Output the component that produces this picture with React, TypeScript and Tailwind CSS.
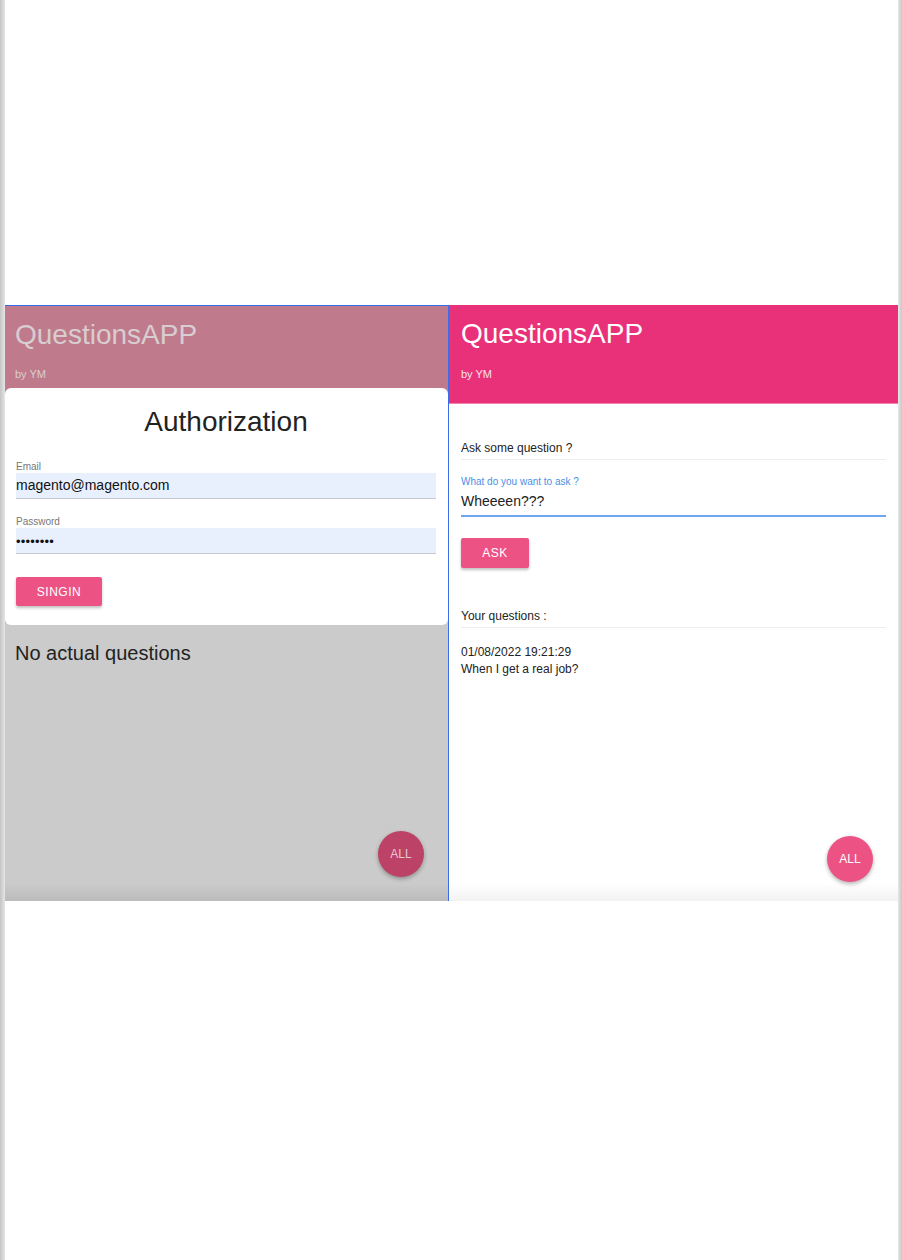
import React from "react";

const font = { fontFamily: '"Liberation Sans", Arial, sans-serif' };

function LeftPanel() {
  return (
    <div className="relative flex w-[444px] flex-col border-t border-r border-[#3b6be8] bg-[#cbcbcb]">
      <div className="h-[98px] bg-[#bf7b8c] pl-[10px] pt-[13px]">
        <div className="text-[28px] leading-[32px] text-[#d8cdd1]">QuestionsAPP</div>
        <div className="mt-[16px] text-[11px] leading-[14px] text-[#dccbd1]">by YM</div>
      </div>
      <div className="-mt-[16px] rounded-[6px] bg-white pb-[19px] pl-[11px] pr-[12px] pt-[18px]">
        <div className="text-center text-[28px] leading-[32px] text-[#222]">Authorization</div>
        <div className="mt-[23px] text-[10px] leading-[12px] text-[#777]">Email</div>
        <div className="flex h-[26px] items-center border-b border-[#c6c9d0] bg-[#e8f0fe] text-[14px] text-[#111]">
          magento@magento.com
        </div>
        <div className="mt-[17px] text-[10px] leading-[12px] text-[#777]">Password</div>
        <div className="flex h-[26px] items-center border-b border-[#c6c9d0] bg-[#e8f0fe] pt-[2px] text-[13px] tracking-[0.2px] text-[#111]">
          ••••••••
        </div>
        <div className="mt-[23px] flex h-[29px] w-[86px] items-center justify-center rounded-[2px] bg-[#ec5384] text-[12px] tracking-[0.5px] text-white shadow-[0_2px_3px_rgba(0,0,0,0.25)]">
          SINGIN
        </div>
      </div>
      <div className="mt-[16px] pl-[10px] text-[20px] leading-[24px] text-[#222]">No actual questions</div>
      <div className="pointer-events-none absolute bottom-0 left-0 right-0 h-[18px] bg-gradient-to-b from-transparent to-[rgba(0,0,0,0.08)]" />
      <div className="absolute bottom-[24px] right-[24px] flex h-[46px] w-[46px] items-center justify-center rounded-full bg-[#bd4267] text-[12px] text-[#e9c7d1] shadow-[0_2px_4px_rgba(0,0,0,0.3)]">
        ALL
      </div>
    </div>
  );
}

function RightPanel() {
  return (
    <div className="relative flex flex-1 flex-col bg-white">
      <div className="h-[99px] border-b border-[#f183ae] bg-[#e9317a] pl-[12px] pt-[13px]">
        <div className="text-[28px] leading-[32px] text-white">QuestionsAPP</div>
        <div className="mt-[17px] text-[11px] leading-[14px] text-[#fbe1eb]">by YM</div>
      </div>
      <div className="flex flex-col px-[12px] pt-[37px]">
        <div className="border-b border-[#eeeeee] pb-[3px] text-[12px] leading-[15px] text-[#222]">Ask some question ?</div>
        <div className="mt-[16px] text-[10px] leading-[12px] text-[#4a8fe7]">What do you want to ask ?</div>
        <div className="mt-[5px] border-b-2 border-[#6fa6ef] pb-[5px] text-[14px] leading-[17px] text-[#222]">Wheeeen???</div>
        <div className="mt-[21px] flex h-[30px] w-[68px] items-center justify-center rounded-[2px] bg-[#ec5384] text-[12px] tracking-[0.5px] text-white shadow-[0_2px_3px_rgba(0,0,0,0.25)]">
          ASK
        </div>
        <div className="mt-[41px] border-b border-[#eeeeee] pb-[3px] text-[12px] leading-[15px] text-[#222]">Your questions :</div>
        <div className="mt-[16px] text-[12px] leading-[17px] text-[#222]">01/08/2022 19:21:29</div>
        <div className="text-[12px] leading-[17px] text-[#222]">When I get a real job?</div>
      </div>
      <div className="pointer-events-none absolute bottom-0 left-0 right-0 h-[18px] bg-gradient-to-b from-transparent to-[rgba(0,0,0,0.05)]" />
      <div className="absolute bottom-[19px] right-[25px] flex h-[46px] w-[46px] items-center justify-center rounded-full bg-[#ec5384] text-[12px] text-white shadow-[0_2px_4px_rgba(0,0,0,0.3)]">
        ALL
      </div>
    </div>
  );
}

export default function App() {
  return (
    <div className="flex h-[1260px] w-[902px] bg-white" style={font}>
      <div className="w-[5px] bg-gradient-to-r from-[#c4c4c4] to-[#e6e6e6]" />
      <div className="flex flex-1 flex-col">
        <div className="h-[305px]" />
        <div className="flex h-[596px]">
          <LeftPanel />
          <RightPanel />
        </div>
      </div>
      <div className="w-[4px] bg-gradient-to-r from-[#e6e6e6] to-[#c8c8c8]" />
    </div>
  );
}
